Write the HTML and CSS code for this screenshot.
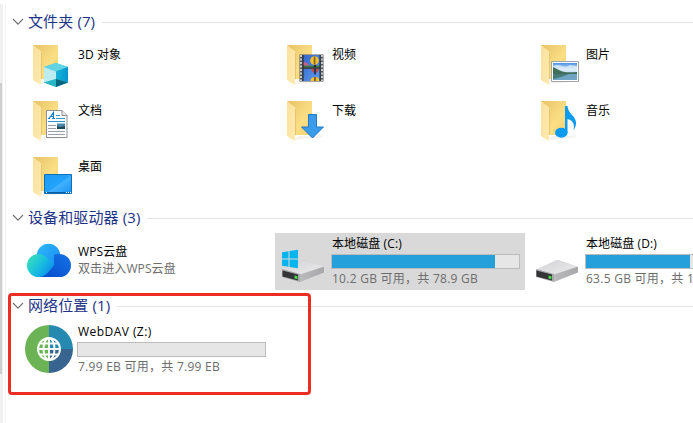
FILE: index.html
```
<!DOCTYPE html>
<html lang="zh-CN">
<head>
  <meta charset="UTF-8" />
  <meta name="viewport" content="width=device-width, initial-scale=1.0"/>
  <title>此电脑</title>
  <link rel="stylesheet" href="styles.css">
</head>
<body>
  <!-- shared shapes -->
  <svg class="defs" width="0" height="0">
    <defs>
      <linearGradient id="back" x1="0" y1="0" x2="1" y2="1">
        <stop offset="0" stop-color="#e6c367"/><stop offset="0.6" stop-color="#fbdf85"/><stop offset="1" stop-color="#f3d06c"/>
      </linearGradient>
      <linearGradient id="flap" x1="0" y1="0" x2="1" y2="1">
        <stop offset="0" stop-color="#fbe09a"/><stop offset="1" stop-color="#ffeab0"/>
      </linearGradient>
      <linearGradient id="screen" x1="0" y1="0" x2="1" y2="1">
        <stop offset="0" stop-color="#1c9bf5"/><stop offset="0.5" stop-color="#22a2fb"/><stop offset="0.55" stop-color="#42b1ff"/><stop offset="1" stop-color="#1893ee"/>
      </linearGradient>
      <linearGradient id="cubeRight" x1="0" y1="0" x2="1" y2="0">
        <stop offset="0" stop-color="#16b4d8"/><stop offset="1" stop-color="#0694cf"/>
      </linearGradient>
      <linearGradient id="sky" x1="0" y1="0" x2="0" y2="1">
        <stop offset="0" stop-color="#4d93e4"/><stop offset="0.45" stop-color="#d5e9f8"/><stop offset="1" stop-color="#9cc8e0"/>
      </linearGradient>
      <linearGradient id="film" x1="0" y1="0" x2="1" y2="1">
        <stop offset="0" stop-color="#3465c9"/><stop offset="1" stop-color="#5f9df0"/>
      </linearGradient>
      <linearGradient id="diskTop" x1="0" y1="0" x2="1" y2="1">
        <stop offset="0" stop-color="#d2d2d4"/><stop offset="1" stop-color="#ececee"/>
      </linearGradient>
      <linearGradient id="diskSide" x1="0" y1="0" x2="1" y2="0">
        <stop offset="0" stop-color="#c8c8ca"/><stop offset="1" stop-color="#a8a8ab"/>
      </linearGradient>
      <linearGradient id="cloudTop" x1="0" y1="0" x2="1" y2="1">
        <stop offset="0" stop-color="#2fb9fa"/><stop offset="1" stop-color="#1689f3"/>
      </linearGradient>
      <linearGradient id="cloudLeft" x1="0" y1="0.2" x2="1" y2="0.8">
        <stop offset="0" stop-color="#38e0b8"/><stop offset="0.5" stop-color="#18bde0"/><stop offset="1" stop-color="#0a84ee"/>
      </linearGradient>
      <linearGradient id="cloudRight" x1="1" y1="0" x2="0" y2="1">
        <stop offset="0" stop-color="#1674e6"/><stop offset="1" stop-color="#0449cb"/>
      </linearGradient>
      <g id="folder">
        <path d="M14 43l5-4h26l-5 2z" fill="#f5f3ee"/>
        <path d="M8 4h25v34H16v-4z" fill="url(#back)"/>
        <path d="M8 4l7.500 6q1 1 1 2v26l-1 6-7.500-5z" fill="url(#flap)"/>
        <path d="M16.500 12v26" stroke="#e3bf62" stroke-width="0.800"/>
      </g>
      <g id="disk">
        <path d="M3 33.500L23 23.500q1.500-.6 3 0L45 30v5.500L21 45z" fill="url(#diskSide)"/>
        <path d="M3 32.500L23 23.500q1.500-.6 3 0L45 29.500 21 37.500z" fill="url(#diskTop)"/>
        <path d="M3 32l18 5V45L3 40z" fill="#a8a8aa"/>
        <path d="M3.500 33.500l15.500 4v6L3.500 39.500z" fill="#343436"/>
        <path d="M15.500 38.500l3 .8v3l-3-.8z" fill="#3fdc45"/>
      </g>
      <symbol id="chevron" viewBox="0 0 12 8">
        <path d="M1 1l5 5.200L11 1" fill="none" stroke="#707070" stroke-width="1.100"/>
      </symbol>
    </defs>
  </svg>

  <div class="window">
    <div class="scrollbar"><div class="thumb"></div></div>

    <div class="pane">
      <div class="group-header">
        <svg class="chevron"><use href="#chevron"/></svg>
        <span class="group-title">文件夹 (7)</span>
        <span class="rule"></span>
      </div>
      <div class="grid folders">
        <div class="tile">
          <svg class="icon" viewBox="0 0 48 48">
            <use href="#folder"/>
            <path d="M31 22l12 4v15.500L31 46l-12-4.500V26z" fill="#35bdd0"/>
            <path d="M31 22l12 4-12 4.500L19 26z" fill="#62d3e5"/>
            <path d="M19 26l12 4.500V38l-12 3.500z" fill="#bcebf0"/>
            <path d="M31 30.500L43 26v15.500L31 38z" fill="url(#cubeRight)"/>
            <path d="M19 41.500L31 38v8z" fill="#28b5c4"/>
            <path d="M31 38l12 3.500L31 46z" fill="#05677e"/>
          </svg>
          <div class="info"><div class="name">3D 对象</div></div>
        </div>

        <div class="tile">
          <svg class="icon" viewBox="0 0 48 48">
            <use href="#folder"/>
            <path d="M20.500 13.500h24v27h-24z" fill="#555a60"/>
            <path d="M22 14v26M43 14v26" stroke="#e4e4e4" stroke-width="1.600" stroke-dasharray="2 1.500"/>
            <path d="M24 14h17v12.500H24zM24 27.500h17V40H24z" fill="url(#film)"/>
            <path d="M24 21q4 0 5 2t4 3.500h-9z" fill="#c65d8c"/>
            <path d="M24 24.500h17v2H24z" fill="#397c45"/>
            <circle cx="35.500" cy="19.500" r="4.300" fill="#f1c22f"/>
            <path d="M34.700 15.500h1.800v8h-1.800z" fill="#8a6420"/>
            <path d="M35 24h2v2h-2z" fill="#222"/>
            <path d="M32 27.500h8q-1 4-4 5-3-1-4-5z" fill="#c54b36"/>
            <path d="M35 27.500h2v6h-2z" fill="#27356b"/>
            <path d="M31.500 40q0-4 4.500-4t4.500 4z" fill="#f1c22f"/>
            <path d="M35 36h2v4h-2z" fill="#8a6420"/>
            <path d="M24 14v26M41 14v26M24 27h17" stroke="#222" stroke-width="1"/>
          </svg>
          <div class="info"><div class="name">视频</div></div>
        </div>

        <div class="tile">
          <svg class="icon" viewBox="0 0 48 48">
            <use href="#folder"/>
            <path d="M18.500 20.500h27v20h-27z" fill="#fff" stroke="#a0a4a8"/>
            <path d="M20 22h24v17H20z" fill="url(#sky)"/>
            <path d="M20 25q5-2 9 0t8-1l7 1v4H20z" fill="#eaf4fb" opacity="0.700"/>
            <path d="M20 26q4 2 8 4t16 1v2H20z" fill="#3f6e5b"/>
            <path d="M20 33h24v6H20z" fill="#6fa5c2"/>
            <path d="M20 33h16l-8 3-8 2z" fill="#457a78"/>
          </svg>
          <div class="info"><div class="name">图片</div></div>
        </div>

        <div class="tile">
          <svg class="icon" viewBox="0 0 48 48">
            <use href="#folder"/>
            <path d="M21.500 13.500H37l5 5v22H21.500z" fill="#fcfcfc" stroke="#8d9196"/>
            <path d="M37 13.500v5h5" fill="#e8e8e8" stroke="#8d9196"/>
            <path d="M24 21.500l4.500-6v6M25.500 19.500h3M23 21.500h2M27 21.500h3" fill="none" stroke="#1679c4" stroke-width="1.100"/>
            <path d="M31 18.500h4M31 21.500h9M23 24.500h17" stroke="#2b95d1"/>
            <path d="M23 28.500h8M23 31.500h8M23 34.500h17M23 37.500h17" stroke="#9b9fa3"/>
            <path d="M32 26.500h8V32h-8z" fill="#4b87a8"/>
            <path d="M32 29l3 1 5-1v3h-8z" fill="#24495a"/>
          </svg>
          <div class="info"><div class="name">文档</div></div>
        </div>

        <div class="tile">
          <svg class="icon" viewBox="0 0 48 48">
            <use href="#folder"/>
            <path d="M29.500 17.500h8v12.500h7L33.500 41 22.500 30h7z" fill="#3a9bea" stroke="#2379c4"/>
          </svg>
          <div class="info"><div class="name">下载</div></div>
        </div>

        <div class="tile">
          <svg class="icon" viewBox="0 0 48 48">
            <use href="#folder"/>
            <ellipse cx="28.300" cy="35.800" rx="6.300" ry="5" fill="#0c9bee"/>
            <path d="M32 9h2.500c.5 5 3 7 5.500 10 4 5 4 9 .5 14.500 1-6 .5-9.500-6-11.500V36H32z" fill="#0c9bee"/>
          </svg>
          <div class="info"><div class="name">音乐</div></div>
        </div>

        <div class="tile">
          <svg class="icon" viewBox="0 0 48 48">
            <use href="#folder"/>
            <path d="M19.500 21.500h27v19h-27z" fill="url(#screen)" stroke="#0d6fb6"/>
            <path d="M20 39.500h26" stroke="#0b5e9e"/>
            <path d="M21 39.500h1M41 39.500h1M43 39.500h1M45 39.500h1" stroke="#fff"/>
          </svg>
          <div class="info"><div class="name">桌面</div></div>
        </div>
      </div>

      <div class="group-header">
        <svg class="chevron"><use href="#chevron"/></svg>
        <span class="group-title">设备和驱动器 (3)</span>
        <span class="rule"></span>
      </div>
      <div class="grid drives">
        <div class="tile cloud">
          <svg class="icon" viewBox="0 0 48 48">
            <circle cx="23.500" cy="18.500" r="11.700" fill="url(#cloudTop)"/>
            <path d="M29 17.500q2-.5 5.500-.5a11.500 11.500 0 0 1 0 23H14l15-12z" fill="url(#cloudRight)"/>
            <path d="M13.500 17q5 0 8.500 3.500l7.500 7q-2 3-5.500 7-5 5.500-10.500 5.500a11.500 11.500 0 0 1 0-23z" fill="url(#cloudLeft)"/>
          </svg>
          <div class="info">
            <div class="name">WPS云盘</div>
            <div class="detail">双击进入WPS云盘</div>
          </div>
        </div>

        <div class="tile selected">
          <svg class="icon" viewBox="0 0 48 48">
            <use href="#disk"/>
            <path d="M3 15.200l6.500-1v7.300H3zM10.500 14l8.500-1.200v8.700h-8.500zM3 22.500h6.500v7.300l-6.500-1zM10.500 22.500H19v8.700L10.500 30z" fill="#08b4ee"/>
          </svg>
          <div class="info">
            <div class="name">本地磁盘 (C:)</div>
            <div class="bar"><div class="used" style="width: 87.2%"></div></div>
            <div class="detail size">10.2 GB 可用，共 78.9 GB</div>
          </div>
        </div>

        <div class="tile">
          <svg class="icon" viewBox="0 0 48 48"><use href="#disk"/></svg>
          <div class="info">
            <div class="name">本地磁盘 (D:)</div>
            <div class="bar"><div class="used" style="width: 55.6%"></div></div>
            <div class="detail size">63.5 GB 可用，共 1</div>
          </div>
        </div>
      </div>

      <div class="group-header">
        <svg class="chevron"><use href="#chevron"/></svg>
        <span class="group-title">网络位置 (1)</span>
        <span class="rule"></span>
      </div>
      <div class="grid drives">
        <div class="tile">
          <svg class="icon" viewBox="0 0 48 48">
            <path d="M24 0a24 24 0 0 0 0 48z" fill="#6bb354"/>
            <path d="M24 0a24 24 0 0 1 24 24H24z" fill="#268ab0"/>
            <path d="M48 24a24 24 0 0 1-24 24V24z" fill="#38658f"/>
            <g fill="none" stroke="#fff" stroke-width="1.900">
              <circle cx="24" cy="24" r="11"/>
              <ellipse cx="24" cy="24" rx="5.500" ry="11"/>
              <path d="M24 13v22M13 24h22M15 18.500h18M15 29.500h18"/>
            </g>
          </svg>
          <div class="info">
            <div class="name network">WebDAV (Z:)</div>
            <div class="bar"></div>
            <div class="detail size">7.99 EB 可用，共 7.99 EB</div>
          </div>
        </div>
      </div>
    </div>

    <div class="highlight"></div>
  </div>
</body>
</html>
```
FILE: styles.css
```
body {
  margin: 0;
  background: #fff;
  font-family: "Open Sans", "Noto Sans CJK SC", sans-serif;
  font-size: 12px;
  color: #000;
}
.defs {
  position: absolute;
}
.window {
  position: relative;
  display: flex;
  width: 693px;
  height: 423px;
  overflow: hidden;
}

/* scrollbar of the navigation tree */
.scrollbar {
  flex: none;
  box-sizing: border-box;
  width: 6px;
  margin-top: 4px;
  padding-top: 79px;
  border-right: 1px solid #f2f2f2;
  background: linear-gradient(to right, #f0f0f0 3px, #fff 3px);
}
.thumb {
  width: 2px;
  height: 291px;
  background: #cdcdcd;
}

.pane {
  flex: none;
  width: 800px;
  padding-top: 9px;
}
.group-header {
  display: flex;
  align-items: center;
  height: 26px;
  margin-bottom: 2px;
  padding-left: 6px;
}
.chevron {
  width: 12px;
  height: 8px;
  margin-right: 4px;
}
.group-title {
  padding-bottom: 1px;
  font-size: 15px;
  line-height: 25px;
  letter-spacing: 0.12px;
  color: #1e3287;
  white-space: nowrap;
}
.rule {
  flex: 1;
  height: 1px;
  margin: 1px 0 0 7px;
  background: #e2e2e2;
}

.grid {
  display: grid;
  grid-template-columns: repeat(3, 250px);
  column-gap: 4px;
  padding-left: 15px;
}
.folders {
  grid-auto-rows: 56px;
}
.drives {
  grid-auto-rows: 57px;
  margin-bottom: 3px;
}
.tile {
  display: flex;
  box-sizing: border-box;
  padding: 4px;
}
.selected {
  background: #d9d9d9;
}
.icon {
  flex: none;
  width: 48px;
  height: 48px;
}
.info {
  flex: none;
  width: 189px;
  margin-left: 4px;
  white-space: nowrap;
}
.name,
.detail {
  height: 17px;
  padding-left: 1px;
  line-height: 17px;
  letter-spacing: 0.1px;
}
.folders .name {
  margin-top: 5px;
}
.drives .name {
  margin-top: -2px;
}
.drives .cloud .name {
  margin-top: 6px;
}
.drives .network {
  letter-spacing: 0.45px;
}
.detail {
  color: #6d6d6d;
}
.size {
  letter-spacing: 0.26px;
}
.bar {
  box-sizing: border-box;
  height: 15px;
  margin: 2px 0 1px;
  border: 1px solid #bcbcbc;
  background: #e6e6e6;
}
.used {
  height: 100%;
  background: #26a0da;
}

.highlight {
  position: absolute;
  left: 8px;
  top: 293px;
  box-sizing: border-box;
  width: 303px;
  height: 102px;
  border: 3px solid #ea2e24;
  border-radius: 4px;
}
```
